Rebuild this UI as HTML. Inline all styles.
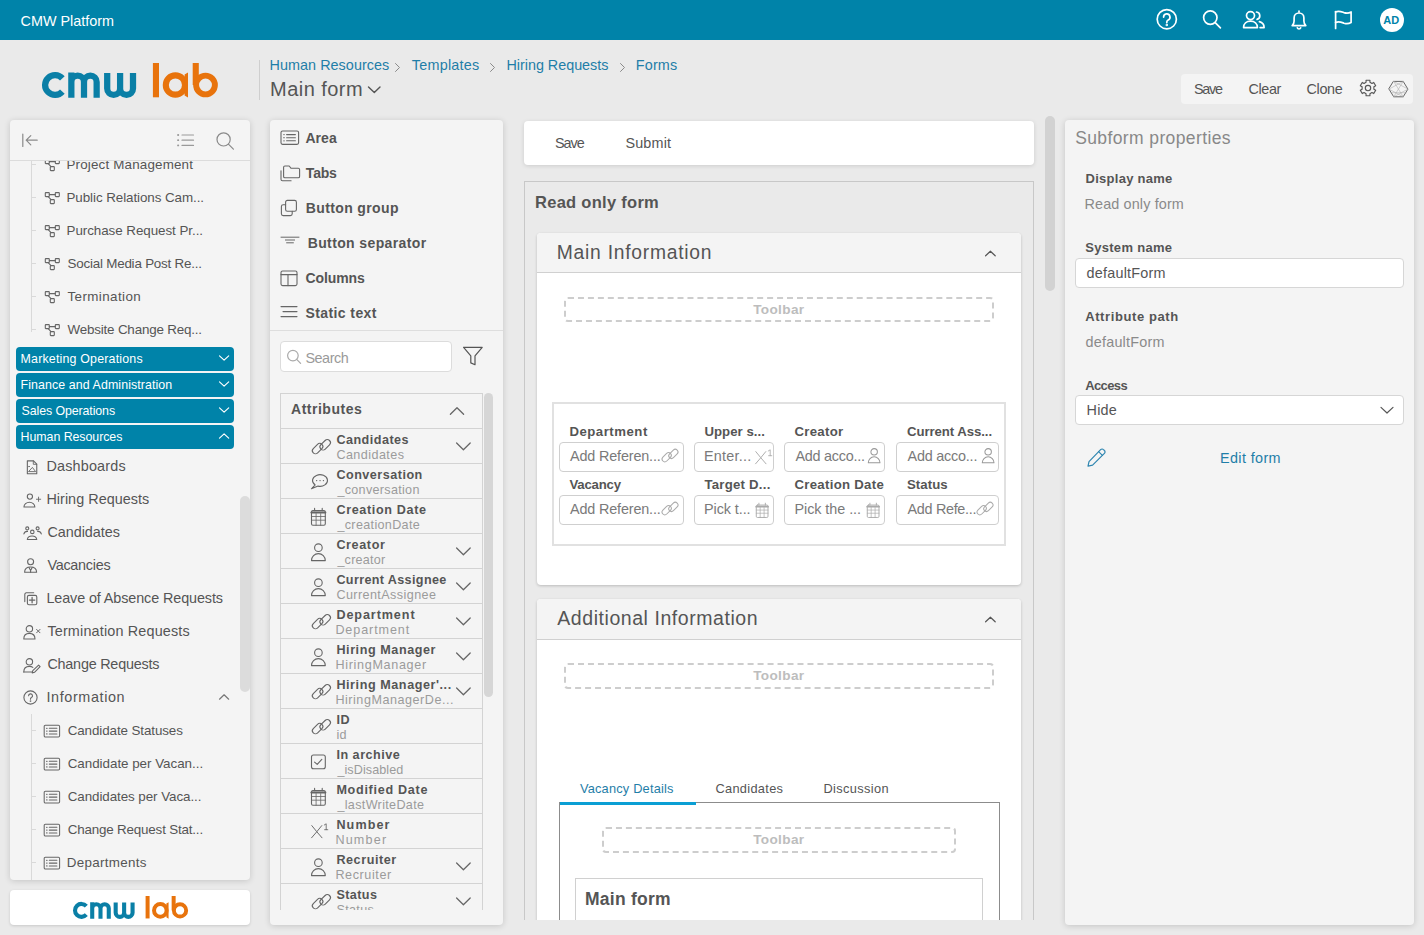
<!DOCTYPE html>
<html><head><meta charset="utf-8"><title>CMW Platform</title>
<style>
html,body{margin:0;padding:0;}
body{width:1424px;height:935px;overflow:hidden;position:relative;background:#eaeaea;font-family:"Liberation Sans", sans-serif;}
.t{position:absolute;white-space:nowrap;}
.r{position:absolute;}
.s{position:absolute;overflow:visible;}
.clip{position:absolute;overflow:hidden;}
</style></head><body>
<div class="r" style="left:0px;top:0px;width:1424px;height:40px;background:#0083a9"></div>
<div class="t" style="left:20.60px;top:13.81px;font-size:14.4px;line-height:14.4px;color:#fff;letter-spacing:-0.014px;">CMW Platform</div>
<svg class="s" style="left:1155px;top:8px;" width="24" height="24" viewBox="0 0 24 24" fill="none" stroke="#fff" stroke-width="1.7" stroke-linecap="round" stroke-linejoin="round"><circle cx="11.8" cy="11.2" r="9.6"/><path d="M8.6 9.1a3.2 3.2 0 1 1 4.6 2.9c-.9.5-1.4 1-1.4 2v.6"/><circle cx="11.8" cy="16.9" r=".4" fill="#fff"/></svg>
<svg class="s" style="left:1200px;top:8px;" width="24" height="24" viewBox="0 0 24 24" fill="none" stroke="#fff" stroke-width="1.7" stroke-linecap="round" stroke-linejoin="round"><circle cx="10.3" cy="9.6" r="6.7"/><path d="M15.2 14.6l5.2 5.3"/></svg>
<svg class="s" style="left:1241px;top:8px;" width="27" height="24" viewBox="0 0 27 24" fill="none" stroke="#fff" stroke-width="1.7" stroke-linecap="round" stroke-linejoin="round"><circle cx="9.5" cy="7.6" r="4"/><path d="M2.6 19.6c0-4 3-6.4 6.9-6.4s6.9 2.4 6.9 6.4z"/><path d="M15.5 4a3.8 3.8 0 0 1 .6 7.4"/><path d="M18.4 13.6c2.7.7 4.7 2.8 4.7 6h-4"/></svg>
<svg class="s" style="left:1287px;top:8px;" width="24" height="24" viewBox="0 0 24 24" fill="none" stroke="#fff" stroke-width="1.7" stroke-linecap="round" stroke-linejoin="round"><path d="M5.2 17.6h13.6c-1.3-1.3-1.9-2.6-1.9-4.6V9.9a4.9 4.9 0 0 0-9.8 0V13c0 2-.6 3.3-1.9 4.6z"/><path d="M10.3 19.8a1.8 1.8 0 0 0 3.4 0"/><path d="M12 3v1"/></svg>
<svg class="s" style="left:1331px;top:8px;" width="24" height="24" viewBox="0 0 24 24" fill="none" stroke="#fff" stroke-width="1.7" stroke-linecap="round" stroke-linejoin="round"><path d="M4.6 20.4V3.6"/><path d="M4.6 4c3-1.6 5.8-.3 8.4.6 2.5.8 4.5.8 7.1-.6v10.6c-2.6 1.4-4.6 1.4-7.1.6-2.6-.9-5.4-2.2-8.4-.6"/></svg>
<div class="r" style="left:1380px;top:8px;width:24px;height:24px;border-radius:50%;background:#fff"></div>
<div class="t" style="left:1383.30px;top:14.99px;font-size:11px;line-height:11px;color:#0083a9;font-weight:700;">AD</div>
<svg class="s" style="left:39px;top:63px" width="182.00" height="38.00" viewBox="0 0 182 38"><g fill="none"><g stroke="#0a7fa6" stroke-width="6.25"><path d="M23.36 15.38A9.9 9.9 0 1 0 23.36 28.62"/><path d="M32.35 9.4V34.7M32.35 18.9A6.325 6.325 0 0 1 45 18.9V34.7M45 18.9A6.325 6.325 0 0 1 57.65 18.9V34.7"/><path d="M68.2 10V25.4A6.45 6.45 0 0 0 81.1 25.4V10M81.1 25.4A6.45 6.45 0 0 0 94 25.4V10"/></g><g stroke="#e8730c" stroke-width="6.1"><path d="M116.95 0V34.3"/><circle cx="136.4" cy="22" r="9.6"/><path d="M156.75 0V22"/><circle cx="166.5" cy="22" r="9.4" stroke-width="5.9"/></g><path fill="#e8730c" d="M145.6 11.5L149 9.6V34.6L145.6 32.5z"/></g></svg>
<div class="r" style="left:259px;top:60px;width:1px;height:40px;background:#cfcfcf"></div>
<div class="t" style="left:269.60px;top:57.71px;font-size:14.4px;line-height:14.4px;color:#1f7ea8;letter-spacing:0.030px;">Human Resources</div>
<svg class="s" style="left:392px;top:61px;" width="10" height="12" viewBox="0 0 10 12" fill="none" stroke="#8a8a8a" stroke-width="1.0" stroke-linecap="round" stroke-linejoin="round"><path d="M3.5 2.5l4 4-4 4"/></svg>
<div class="t" style="left:411.80px;top:57.71px;font-size:14.4px;line-height:14.4px;color:#1f7ea8;letter-spacing:0.226px;">Templates</div>
<svg class="s" style="left:487px;top:61px;" width="10" height="12" viewBox="0 0 10 12" fill="none" stroke="#8a8a8a" stroke-width="1.0" stroke-linecap="round" stroke-linejoin="round"><path d="M3.5 2.5l4 4-4 4"/></svg>
<div class="t" style="left:506.50px;top:57.71px;font-size:14.4px;line-height:14.4px;color:#1f7ea8;letter-spacing:-0.035px;">Hiring Requests</div>
<svg class="s" style="left:617px;top:61px;" width="10" height="12" viewBox="0 0 10 12" fill="none" stroke="#8a8a8a" stroke-width="1.0" stroke-linecap="round" stroke-linejoin="round"><path d="M3.5 2.5l4 4-4 4"/></svg>
<div class="t" style="left:635.80px;top:57.71px;font-size:14.4px;line-height:14.4px;color:#1f7ea8;letter-spacing:0.157px;">Forms</div>
<div class="t" style="left:270.00px;top:78.87px;font-size:20px;line-height:20px;color:#555;letter-spacing:0.469px;">Main form</div>
<svg class="s" style="left:366px;top:84px;" width="16" height="12" viewBox="0 0 16 12" fill="none" stroke="#555" stroke-width="1.4" stroke-linecap="round" stroke-linejoin="round"><path d="M2.5 3l5.8 5.6L14 3"/></svg>
<div class="r" style="left:1181px;top:74px;width:232px;height:30px;background:#f4f4f4;border-radius:4px"></div>
<div class="t" style="left:1194.00px;top:81.71px;font-size:14.4px;line-height:14.4px;color:#555;letter-spacing:-1.266px;">Save</div>
<div class="t" style="left:1248.50px;top:81.71px;font-size:14.4px;line-height:14.4px;color:#555;letter-spacing:-0.399px;">Clear</div>
<div class="t" style="left:1306.50px;top:81.71px;font-size:14.4px;line-height:14.4px;color:#555;letter-spacing:-0.349px;">Clone</div>
<svg class="s" style="left:1358.2px;top:78.3px;" width="20" height="20" viewBox="0 0 20 20" fill="none" stroke="#555" stroke-width="1.15" stroke-linecap="round" stroke-linejoin="round"><path d="M8.05 4.33L8.06 2.24L11.94 2.24L11.95 4.33L13.94 5.47L15.75 4.44L17.69 7.79L15.89 8.86L15.89 11.14L17.69 12.21L15.75 15.56L13.94 14.53L11.95 15.67L11.94 17.76L8.06 17.76L8.05 15.67L6.06 14.53L4.25 15.56L2.31 12.21L4.11 11.14L4.11 8.86L2.31 7.79L4.25 4.44L6.06 5.47z"/><circle cx="10" cy="10" r="2.7"/></svg>
<svg class="s" style="left:1388px;top:79.5px;" width="21" height="18" viewBox="0 0 21 18" fill="none" stroke="#666" stroke-width="1.0" stroke-linecap="round" stroke-linejoin="round"><path d="M5.7 1.4h9.5l4.7 7.7-4.7 7.7H5.7L1 9.1z" stroke="#666"/><path d="M5.7 1.4l9.5 15.4M15.2 1.4L5.7 16.8M1 9.1l14.2-7.7M1 9.1l14.2 7.7M19.9 9.1L5.7 1.4M19.9 9.1L5.7 16.8M3 12.7h15" stroke-width=".55" stroke="#aaa"/></svg>
<div class="r" style="left:10px;top:120px;width:240px;height:760px;background:#f4f4f4;border-radius:4px;box-shadow:0 1px 6px rgba(0,0,0,.16)"></div>
<div class="r" style="left:10px;top:160px;width:240px;height:1px;background:#dcdcdc"></div>
<svg class="s" style="left:20px;top:131px;" width="20" height="18" viewBox="0 0 20 18" fill="none" stroke="#8a8a8a" stroke-width="1.2" stroke-linecap="round" stroke-linejoin="round"><path d="M2.8 3v12.5"/><path d="M17.2 9.2H6.2M10.8 4.6L6.2 9.2l4.6 4.6"/></svg>
<svg class="s" style="left:175px;top:131px;" width="21" height="18" viewBox="0 0 21 18" fill="none" stroke="#9a9a9a" stroke-width="1.2" stroke-linecap="round" stroke-linejoin="round"><path d="M7 4h11.5M7 9.2h11.5M7 14.4h11.5" /><path d="M3 4h.3M3 9.2h.3M3 14.4h.3" stroke-width="1.8"/></svg>
<svg class="s" style="left:214px;top:130px;" width="22" height="22" viewBox="0 0 22 22" fill="none" stroke="#8a8a8a" stroke-width="1.2" stroke-linecap="round" stroke-linejoin="round"><circle cx="9.6" cy="9.4" r="6.6"/><path d="M14.4 14.2l5 5"/></svg>
<div class="clip" style="left:10px;top:161px;width:240px;height:719px">
<div class="r" style="left:20.5px;top:-1px;width:1px;height:172px;background:#d9d9d9"></div>
<div class="r" style="left:21px;top:3px;width:5px;height:1px;background:#d9d9d9"></div>
<svg class="s" style="left:33.5px;top:-3.1999999999999886px;" width="17" height="14" viewBox="0 0 17 14" fill="none" stroke="#666" stroke-width="1.1" stroke-linecap="round" stroke-linejoin="round"><rect x="1.3" y="1.6" width="4" height="4" rx=".6"/><rect x="11.3" y="1.6" width="4" height="4" rx=".6"/><rect x="6.3" y="8.6" width="4" height="4" rx=".6"/><path d="M5.3 3.6h6M4.2 5.6l2.8 3"/></svg>
<div class="t" style="left:56.50px;top:-3.34px;font-size:13.4px;line-height:13.4px;color:#555;letter-spacing:0.168px;">Project Management</div>
<div class="r" style="left:21px;top:36px;width:5px;height:1px;background:#d9d9d9"></div>
<svg class="s" style="left:33.5px;top:29.80000000000001px;" width="17" height="14" viewBox="0 0 17 14" fill="none" stroke="#666" stroke-width="1.1" stroke-linecap="round" stroke-linejoin="round"><rect x="1.3" y="1.6" width="4" height="4" rx=".6"/><rect x="11.3" y="1.6" width="4" height="4" rx=".6"/><rect x="6.3" y="8.6" width="4" height="4" rx=".6"/><path d="M5.3 3.6h6M4.2 5.6l2.8 3"/></svg>
<div class="t" style="left:56.50px;top:29.66px;font-size:13.4px;line-height:13.4px;color:#555;letter-spacing:-0.075px;">Public Relations Cam...</div>
<div class="r" style="left:21px;top:69px;width:5px;height:1px;background:#d9d9d9"></div>
<svg class="s" style="left:33.5px;top:62.80000000000001px;" width="17" height="14" viewBox="0 0 17 14" fill="none" stroke="#666" stroke-width="1.1" stroke-linecap="round" stroke-linejoin="round"><rect x="1.3" y="1.6" width="4" height="4" rx=".6"/><rect x="11.3" y="1.6" width="4" height="4" rx=".6"/><rect x="6.3" y="8.6" width="4" height="4" rx=".6"/><path d="M5.3 3.6h6M4.2 5.6l2.8 3"/></svg>
<div class="t" style="left:56.50px;top:62.66px;font-size:13.4px;line-height:13.4px;color:#555;letter-spacing:-0.056px;">Purchase Request Pr...</div>
<div class="r" style="left:21px;top:102px;width:5px;height:1px;background:#d9d9d9"></div>
<svg class="s" style="left:33.5px;top:95.80000000000001px;" width="17" height="14" viewBox="0 0 17 14" fill="none" stroke="#666" stroke-width="1.1" stroke-linecap="round" stroke-linejoin="round"><rect x="1.3" y="1.6" width="4" height="4" rx=".6"/><rect x="11.3" y="1.6" width="4" height="4" rx=".6"/><rect x="6.3" y="8.6" width="4" height="4" rx=".6"/><path d="M5.3 3.6h6M4.2 5.6l2.8 3"/></svg>
<div class="t" style="left:57.50px;top:95.66px;font-size:13.4px;line-height:13.4px;color:#555;letter-spacing:-0.212px;">Social Media Post Re...</div>
<div class="r" style="left:21px;top:135px;width:5px;height:1px;background:#d9d9d9"></div>
<svg class="s" style="left:33.5px;top:128.8px;" width="17" height="14" viewBox="0 0 17 14" fill="none" stroke="#666" stroke-width="1.1" stroke-linecap="round" stroke-linejoin="round"><rect x="1.3" y="1.6" width="4" height="4" rx=".6"/><rect x="11.3" y="1.6" width="4" height="4" rx=".6"/><rect x="6.3" y="8.6" width="4" height="4" rx=".6"/><path d="M5.3 3.6h6M4.2 5.6l2.8 3"/></svg>
<div class="t" style="left:57.50px;top:128.66px;font-size:13.4px;line-height:13.4px;color:#555;letter-spacing:0.403px;">Termination</div>
<div class="r" style="left:21px;top:168px;width:5px;height:1px;background:#d9d9d9"></div>
<svg class="s" style="left:33.5px;top:161.8px;" width="17" height="14" viewBox="0 0 17 14" fill="none" stroke="#666" stroke-width="1.1" stroke-linecap="round" stroke-linejoin="round"><rect x="1.3" y="1.6" width="4" height="4" rx=".6"/><rect x="11.3" y="1.6" width="4" height="4" rx=".6"/><rect x="6.3" y="8.6" width="4" height="4" rx=".6"/><path d="M5.3 3.6h6M4.2 5.6l2.8 3"/></svg>
<div class="t" style="left:57.50px;top:161.66px;font-size:13.4px;line-height:13.4px;color:#555;letter-spacing:-0.184px;">Website Change Req...</div>
<div class="r" style="left:6px;top:186px;width:218px;height:24px;background:#0083a9;border-radius:4px"></div>
<div class="t" style="left:10.60px;top:191.50px;font-size:12.4px;line-height:12.4px;color:#fff;letter-spacing:0.186px;">Marketing Operations</div>
<svg class="s" style="left:208px;top:192.8px;" width="12" height="8" viewBox="0 0 12 8" fill="none" stroke="#fff" stroke-width="1.15" stroke-linecap="round" stroke-linejoin="round"><path d="M1.5 1.8l4.6 4.4 4.6-4.4"/></svg>
<div class="r" style="left:6px;top:212px;width:218px;height:24px;background:#0083a9;border-radius:4px"></div>
<div class="t" style="left:10.60px;top:217.50px;font-size:12.4px;line-height:12.4px;color:#fff;letter-spacing:0.086px;">Finance and Administration</div>
<svg class="s" style="left:208px;top:218.8px;" width="12" height="8" viewBox="0 0 12 8" fill="none" stroke="#fff" stroke-width="1.15" stroke-linecap="round" stroke-linejoin="round"><path d="M1.5 1.8l4.6 4.4 4.6-4.4"/></svg>
<div class="r" style="left:6px;top:238px;width:218px;height:24px;background:#0083a9;border-radius:4px"></div>
<div class="t" style="left:11.60px;top:243.50px;font-size:12.4px;line-height:12.4px;color:#fff;letter-spacing:-0.103px;">Sales Operations</div>
<svg class="s" style="left:208px;top:244.8px;" width="12" height="8" viewBox="0 0 12 8" fill="none" stroke="#fff" stroke-width="1.15" stroke-linecap="round" stroke-linejoin="round"><path d="M1.5 1.8l4.6 4.4 4.6-4.4"/></svg>
<div class="r" style="left:6px;top:264px;width:218px;height:24px;background:#0083a9;border-radius:4px"></div>
<div class="t" style="left:10.60px;top:269.50px;font-size:12.4px;line-height:12.4px;color:#fff;letter-spacing:-0.058px;">Human Resources</div>
<svg class="s" style="left:208px;top:270.8px;" width="12" height="8" viewBox="0 0 12 8" fill="none" stroke="#fff" stroke-width="1.15" stroke-linecap="round" stroke-linejoin="round"><path d="M1.5 6.2l4.6-4.4 4.6 4.4"/></svg>
<svg class="s" style="left:12.5px;top:297.5px;" width="19" height="17" viewBox="0 0 19 17" fill="none" stroke="#666" stroke-width="1.1" stroke-linecap="round" stroke-linejoin="round"><path d="M4.35 1.85h6.2l3.2 3.2v9.65H4.35z"/><path d="M10.3 1.9v3.4h3.4" stroke-width=".9"/><path d="M5.8 12.3l3.6-3.9 3 3.9z" stroke-width=".9"/><circle cx="6" cy="7.6" r=".35" stroke-width=".8"/></svg>
<div class="t" style="left:36.40px;top:297.81px;font-size:14.4px;line-height:14.4px;color:#555;letter-spacing:0.178px;">Dashboards</div>
<svg class="s" style="left:12.5px;top:330.5px;" width="19" height="17" viewBox="0 0 19 17" fill="none" stroke="#666" stroke-width="1.1" stroke-linecap="round" stroke-linejoin="round"><circle cx="6.9" cy="4.6" r="2.6"/><path d="M.95 14.95A5.45 4.7 0 0 1 11.85 14.95z"/><path d="M15.55 5.1v4.3M13.4 7.25h4.3" stroke-width=".9"/></svg>
<div class="t" style="left:36.40px;top:330.81px;font-size:14.4px;line-height:14.4px;color:#555;letter-spacing:0.037px;">Hiring Requests</div>
<svg class="s" style="left:12.5px;top:363.5px;" width="19" height="17" viewBox="0 0 19 17" fill="none" stroke="#666" stroke-width="1.1" stroke-linecap="round" stroke-linejoin="round"><circle cx="4.25" cy="3.4" r="1.5"/><circle cx="9.3" cy="6.9" r="1.75"/><circle cx="14.6" cy="3.4" r="1.5"/><path d="M.9 8.9c.4-1.6 1.8-2.6 3.6-2.5M18.3 8.9c-.4-1.6-1.8-2.6-3.6-2.5"/><path d="M4.3 14.55A4.75 3.9 0 0 1 13.75 14.55z"/></svg>
<div class="t" style="left:37.40px;top:363.81px;font-size:14.4px;line-height:14.4px;color:#555;letter-spacing:-0.034px;">Candidates</div>
<svg class="s" style="left:12.5px;top:396.5px;" width="19" height="17" viewBox="0 0 19 17" fill="none" stroke="#666" stroke-width="1.1" stroke-linecap="round" stroke-linejoin="round"><circle cx="7.6" cy="3.8" r="3"/><path d="M1.6 14.3c0-3.3 2.5-5.3 6-5.3s6 2 6 5.3z"/><path d="M6 9.4l1.6 3 1.6-3M7.6 12.4v1.8"/></svg>
<div class="t" style="left:37.40px;top:396.81px;font-size:14.4px;line-height:14.4px;color:#555;letter-spacing:-0.266px;">Vacancies</div>
<svg class="s" style="left:12.5px;top:429.5px;" width="19" height="17" viewBox="0 0 19 17" fill="none" stroke="#666" stroke-width="1.1" stroke-linecap="round" stroke-linejoin="round"><path d="M1.8 10.6V3.4c0-.9.6-1.6 1.5-1.6h7.4"/><rect x="4.4" y="4.4" width="9.4" height="9.4" rx="1.6"/><path d="M9.1 6.4v5.4M6.4 9.1h5.4" stroke-width="1.25"/></svg>
<div class="t" style="left:36.40px;top:429.81px;font-size:14.4px;line-height:14.4px;color:#555;letter-spacing:-0.109px;">Leave of Absence Requests</div>
<svg class="s" style="left:12.5px;top:462.5px;" width="19" height="17" viewBox="0 0 19 17" fill="none" stroke="#666" stroke-width="1.1" stroke-linecap="round" stroke-linejoin="round"><circle cx="6.4" cy="4.8" r="3.2"/><path d="M.8 15c0-3.5 2.4-5.6 5.6-5.6s5.6 2.1 5.6 5.6z"/><path d="M13.6 5.4l3.4 3.4M17 5.4l-3.4 3.4" stroke-width="1"/></svg>
<div class="t" style="left:37.40px;top:462.81px;font-size:14.4px;line-height:14.4px;color:#555;letter-spacing:0.164px;">Termination Requests</div>
<svg class="s" style="left:12.5px;top:495.5px;" width="19" height="17" viewBox="0 0 19 17" fill="none" stroke="#666" stroke-width="1.1" stroke-linecap="round" stroke-linejoin="round"><circle cx="6.4" cy="4.8" r="3.2"/><path d="M.8 15c0-3.5 2.4-5.6 5.6-5.6 1.3 0 2.5.3 3.4 1"/><path d="M15.6 8.2l1.5 1.5-5.6 5.6-2.3.6.6-2.3z"/><path d="M.8 15h8"/></svg>
<div class="t" style="left:37.40px;top:495.81px;font-size:14.4px;line-height:14.4px;color:#555;letter-spacing:-0.229px;">Change Requests</div>
<svg class="s" style="left:12.5px;top:528.5px;" width="19" height="17" viewBox="0 0 19 17" fill="none" stroke="#666" stroke-width="1.1" stroke-linecap="round" stroke-linejoin="round"><circle cx="7.5" cy="7.5" r="6.6"/><path d="M5.6 5.8a1.95 1.95 0 1 1 2.9 1.7c-.6.3-1 .7-1 1.3v.5"/><circle cx="7.5" cy="11.1" r=".3"/></svg>
<div class="t" style="left:36.40px;top:528.81px;font-size:14.4px;line-height:14.4px;color:#555;letter-spacing:0.622px;">Information</div>
<svg class="s" style="left:208px;top:532px;" width="12" height="8" viewBox="0 0 12 8" fill="none" stroke="#777" stroke-width="1.2" stroke-linecap="round" stroke-linejoin="round"><path d="M1.5 6.2l4.6-4.4 4.6 4.4"/></svg>
<div class="r" style="left:20.5px;top:553px;width:1px;height:200px;background:#d9d9d9"></div>
<div class="r" style="left:21px;top:569px;width:5px;height:1px;background:#d9d9d9"></div>
<svg class="s" style="left:33px;top:562.8px;" width="18" height="15" viewBox="0 0 18 15" fill="none" stroke="#666" stroke-width="1.05" stroke-linecap="round" stroke-linejoin="round"><rect x="1.2" y="1.2" width="15.4" height="11.8" rx="1.2"/><path d="M6.3 4.3h7.6M6.3 7.1h7.6M6.3 9.9h7.6"/><path d="M3.7 4.3h.3M3.7 7.1h.3M3.7 9.9h.3" stroke-width="1.3"/></svg>
<div class="t" style="left:57.70px;top:562.66px;font-size:13.4px;line-height:13.4px;color:#555;letter-spacing:-0.099px;">Candidate Statuses</div>
<div class="r" style="left:21px;top:602px;width:5px;height:1px;background:#d9d9d9"></div>
<svg class="s" style="left:33px;top:595.8px;" width="18" height="15" viewBox="0 0 18 15" fill="none" stroke="#666" stroke-width="1.05" stroke-linecap="round" stroke-linejoin="round"><rect x="1.2" y="1.2" width="15.4" height="11.8" rx="1.2"/><path d="M6.3 4.3h7.6M6.3 7.1h7.6M6.3 9.9h7.6"/><path d="M3.7 4.3h.3M3.7 7.1h.3M3.7 9.9h.3" stroke-width="1.3"/></svg>
<div class="t" style="left:57.70px;top:595.66px;font-size:13.4px;line-height:13.4px;color:#555;letter-spacing:-0.027px;">Candidate per Vacan...</div>
<div class="r" style="left:21px;top:635px;width:5px;height:1px;background:#d9d9d9"></div>
<svg class="s" style="left:33px;top:628.8px;" width="18" height="15" viewBox="0 0 18 15" fill="none" stroke="#666" stroke-width="1.05" stroke-linecap="round" stroke-linejoin="round"><rect x="1.2" y="1.2" width="15.4" height="11.8" rx="1.2"/><path d="M6.3 4.3h7.6M6.3 7.1h7.6M6.3 9.9h7.6"/><path d="M3.7 4.3h.3M3.7 7.1h.3M3.7 9.9h.3" stroke-width="1.3"/></svg>
<div class="t" style="left:57.70px;top:628.66px;font-size:13.4px;line-height:13.4px;color:#555;letter-spacing:-0.072px;">Candidates per Vaca...</div>
<div class="r" style="left:21px;top:668px;width:5px;height:1px;background:#d9d9d9"></div>
<svg class="s" style="left:33px;top:661.8px;" width="18" height="15" viewBox="0 0 18 15" fill="none" stroke="#666" stroke-width="1.05" stroke-linecap="round" stroke-linejoin="round"><rect x="1.2" y="1.2" width="15.4" height="11.8" rx="1.2"/><path d="M6.3 4.3h7.6M6.3 7.1h7.6M6.3 9.9h7.6"/><path d="M3.7 4.3h.3M3.7 7.1h.3M3.7 9.9h.3" stroke-width="1.3"/></svg>
<div class="t" style="left:57.70px;top:661.66px;font-size:13.4px;line-height:13.4px;color:#555;letter-spacing:-0.180px;">Change Request Stat...</div>
<div class="r" style="left:21px;top:701px;width:5px;height:1px;background:#d9d9d9"></div>
<svg class="s" style="left:33px;top:694.8px;" width="18" height="15" viewBox="0 0 18 15" fill="none" stroke="#666" stroke-width="1.05" stroke-linecap="round" stroke-linejoin="round"><rect x="1.2" y="1.2" width="15.4" height="11.8" rx="1.2"/><path d="M6.3 4.3h7.6M6.3 7.1h7.6M6.3 9.9h7.6"/><path d="M3.7 4.3h.3M3.7 7.1h.3M3.7 9.9h.3" stroke-width="1.3"/></svg>
<div class="t" style="left:56.70px;top:694.66px;font-size:13.4px;line-height:13.4px;color:#555;letter-spacing:0.314px;">Departments</div>
<div class="r" style="left:230px;top:335px;width:10px;height:196px;background:#dcdcdc;border-radius:5px"></div>
</div>
<div class="r" style="left:10px;top:890px;width:240px;height:35px;background:#fff;border-radius:4px;box-shadow:0 1px 3px rgba(0,0,0,.15)"></div>
<svg class="s" style="left:71px;top:896px" width="119.21" height="24.89" viewBox="0 0 182 38"><g fill="none"><g stroke="#0a7fa6" stroke-width="6.25"><path d="M23.36 15.38A9.9 9.9 0 1 0 23.36 28.62"/><path d="M32.35 9.4V34.7M32.35 18.9A6.325 6.325 0 0 1 45 18.9V34.7M45 18.9A6.325 6.325 0 0 1 57.65 18.9V34.7"/><path d="M68.2 10V25.4A6.45 6.45 0 0 0 81.1 25.4V10M81.1 25.4A6.45 6.45 0 0 0 94 25.4V10"/></g><g stroke="#e8730c" stroke-width="6.1"><path d="M116.95 0V34.3"/><circle cx="136.4" cy="22" r="9.6"/><path d="M156.75 0V22"/><circle cx="166.5" cy="22" r="9.4" stroke-width="5.9"/></g><path fill="#e8730c" d="M145.6 11.5L149 9.6V34.6L145.6 32.5z"/></g></svg>
<div class="r" style="left:270px;top:120px;width:233px;height:805px;background:#f4f4f4;border-radius:4px;box-shadow:0 1px 6px rgba(0,0,0,.16)"></div>
<svg class="s" style="left:280px;top:129.6px;" width="20" height="16" viewBox="0 0 20 16" fill="none" stroke="#666" stroke-width="1.1" stroke-linecap="round" stroke-linejoin="round"><rect x="1" y="1" width="17.6" height="13.4" rx="1.6"/><path d="M6.6 4.6h8.8M6.6 7.7h8.8M6.6 10.8h8.8"/><path d="M3.9 4.6h.2M3.9 7.7h.2M3.9 10.8h.2" stroke-width="1.3"/></svg>
<div class="t" style="left:305.40px;top:130.75px;font-size:14px;line-height:14px;color:#555;font-weight:700;letter-spacing:0.085px;">Area</div>
<svg class="s" style="left:278.5px;top:163.5px;" width="23" height="19" viewBox="0 0 23 19" fill="none" stroke="#666" stroke-width="1.1" stroke-linecap="round" stroke-linejoin="round"><path d="M2 6.8v8.4c0 .9.6 1.5 1.5 1.5h8.6"/><path d="M4.6 3.8V12.4c0 .8.5 1.3 1.3 1.3h13.4c.8 0 1.3-.5 1.3-1.3V5.6c0-.8-.5-1.3-1.3-1.3h-7.2L10.2 2H5.9c-.8 0-1.3.5-1.3 1.3z"/></svg>
<div class="t" style="left:305.80px;top:165.75px;font-size:14px;line-height:14px;color:#555;font-weight:700;letter-spacing:-0.184px;">Tabs</div>
<svg class="s" style="left:280px;top:198.6px;" width="18" height="18" viewBox="0 0 18 18" fill="none" stroke="#666" stroke-width="1.1" stroke-linecap="round" stroke-linejoin="round"><path d="M5.6 5.8H3.2c-1 0-1.8.8-1.8 1.8v7.2c0 1 .8 1.8 1.8 1.8h7.2c1 0 1.8-.8 1.8-1.8v-2.4"/><rect x="5.6" y="1.4" width="10.8" height="10.8" rx="1.8"/></svg>
<div class="t" style="left:305.80px;top:200.75px;font-size:14px;line-height:14px;color:#555;font-weight:700;letter-spacing:0.365px;">Button group</div>
<svg class="s" style="left:280px;top:233.5px;" width="20" height="11" viewBox="0 0 20 11" fill="none" stroke="#666" stroke-width="1.1" stroke-linecap="round" stroke-linejoin="round"><path d="M1 3.2h18M5.4 6h9.2M6.6 8.8h6.8" stroke-width="1"/></svg>
<div class="t" style="left:307.70px;top:235.75px;font-size:14px;line-height:14px;color:#555;font-weight:700;letter-spacing:0.377px;">Button separator</div>
<svg class="s" style="left:280px;top:269.7px;" width="18" height="17" viewBox="0 0 18 17" fill="none" stroke="#666" stroke-width="1.1" stroke-linecap="round" stroke-linejoin="round"><rect x="1" y="1" width="16" height="14.6" rx="1.6"/><path d="M1 4.6h16M8 4.6v11" /></svg>
<div class="t" style="left:305.40px;top:270.75px;font-size:14px;line-height:14px;color:#555;font-weight:700;letter-spacing:-0.084px;">Columns</div>
<svg class="s" style="left:280px;top:305.3px;" width="18" height="13" viewBox="0 0 18 13" fill="none" stroke="#666" stroke-width="1.1" stroke-linecap="round" stroke-linejoin="round"><path d="M1 1.6h16M3 6.6h14M1 11.6h16"/></svg>
<div class="t" style="left:305.40px;top:305.75px;font-size:14px;line-height:14px;color:#555;font-weight:700;letter-spacing:0.415px;">Static text</div>
<div class="r" style="left:270px;top:330px;width:233px;height:1px;background:#dedede"></div>
<div class="r" style="left:280px;top:341px;width:172px;height:31px;background:#fff;border:1px solid #dcdcdc;border-radius:4px;box-sizing:border-box"></div>
<svg class="s" style="left:285px;top:348px;" width="18" height="18" viewBox="0 0 18 18" fill="none" stroke="#aaa" stroke-width="1.2" stroke-linecap="round" stroke-linejoin="round"><circle cx="7.9" cy="7.6" r="5.3"/><path d="M11.7 11.4l3.9 3.9"/></svg>
<div class="t" style="left:305.40px;top:350.71px;font-size:14.4px;line-height:14.4px;color:#9a9a9a;letter-spacing:-0.439px;">Search</div>
<svg class="s" style="left:461px;top:345px;" width="24" height="22" viewBox="0 0 24 22" fill="none" stroke="#555" stroke-width="1.2" stroke-linecap="round" stroke-linejoin="round"><path d="M2.6 2.3h18.6l-7.2 8.6v8.8l-4.2-1.8v-7z"/></svg>
<div class="clip" style="left:280px;top:393px;width:203px;height:517px">
<div class="r" style="left:0px;top:0px;width:203px;height:600px;border:1px solid #d3d3d3;border-bottom:none;box-sizing:border-box"></div>
<div class="t" style="left:11.00px;top:9.15px;font-size:14px;line-height:14px;color:#555;font-weight:700;letter-spacing:0.520px;">Attributes</div>
<svg class="s" style="left:168px;top:11px;" width="18" height="13" viewBox="0 0 18 13" fill="none" stroke="#666" stroke-width="1.3" stroke-linecap="round" stroke-linejoin="round"><path d="M2.4 10.2l6.6-6.4 6.6 6.4"/></svg>
<div class="r" style="left:0px;top:35px;width:203px;height:1px;background:#d3d3d3"></div>
<svg class="s" style="left:30px;top:43.60000000000002px;" width="24" height="20" viewBox="0 0 24 20" fill="none" stroke="#666" stroke-width="1.1" stroke-linecap="round" stroke-linejoin="round"><rect x="-6.1" y="-3.1" width="12.2" height="6.2" rx="3.1" transform="translate(7.6 11.6) rotate(-45)"/><rect x="-6.1" y="-3.1" width="12.2" height="6.2" rx="3.1" transform="translate(15.2 7.8) rotate(-45)"/></svg>
<div class="t" style="left:56.40px;top:40.53px;font-size:12.6px;line-height:12.6px;color:#555;font-weight:700;letter-spacing:0.480px;">Candidates</div>
<div class="t" style="left:56.40px;top:56.03px;font-size:12.6px;line-height:12.6px;color:#9b9b9b;letter-spacing:0.432px;">Candidates</div>
<svg class="s" style="left:175px;top:46.60000000000002px;" width="18" height="12" viewBox="0 0 18 12" fill="none" stroke="#666" stroke-width="1.25" stroke-linecap="round" stroke-linejoin="round"><path d="M1.6 3l6.8 6.8L15.2 3"/></svg>
<div class="r" style="left:0px;top:70px;width:203px;height:1px;background:#d3d3d3"></div>
<svg class="s" style="left:30px;top:78.60000000000002px;" width="24" height="20" viewBox="0 0 24 20" fill="none" stroke="#666" stroke-width="1.1" stroke-linecap="round" stroke-linejoin="round"><path d="M5.18 12.94L1.4 16.8l6.66-2.7A7.5 5.8 0 1 0 5.18 12.94z"/><path d="M6.6 8.6h.1M10 8.6h.1M13.4 8.6h.1" stroke-width="1.3"/></svg>
<div class="t" style="left:56.40px;top:75.53px;font-size:12.6px;line-height:12.6px;color:#555;font-weight:700;letter-spacing:0.492px;">Conversation</div>
<div class="t" style="left:57.40px;top:91.03px;font-size:12.6px;line-height:12.6px;color:#9b9b9b;letter-spacing:0.300px;">_conversation</div>
<div class="r" style="left:0px;top:105px;width:203px;height:1px;background:#d3d3d3"></div>
<svg class="s" style="left:30px;top:113.60000000000002px;" width="24" height="20" viewBox="0 0 24 20" fill="none" stroke="#666" stroke-width="1.1" stroke-linecap="round" stroke-linejoin="round"><rect x="1.5" y="3.6" width="13.8" height="14.6" rx="1.4"/><path d="M1.5 5.5h13.8" stroke-width="2.2"/><path d="M1.5 9.5h13.8M1.5 13.2h13.8M6.1 6.6v11.6M10.7 6.6v11.6" stroke-width=".8"/><path d="M4.6 1.4v2.2M12.2 1.4v2.2"/></svg>
<div class="t" style="left:56.40px;top:110.53px;font-size:12.6px;line-height:12.6px;color:#555;font-weight:700;letter-spacing:0.652px;">Creation Date</div>
<div class="t" style="left:57.40px;top:126.03px;font-size:12.6px;line-height:12.6px;color:#9b9b9b;letter-spacing:0.333px;">_creationDate</div>
<div class="r" style="left:0px;top:140px;width:203px;height:1px;background:#d3d3d3"></div>
<svg class="s" style="left:30px;top:148.60000000000002px;" width="24" height="20" viewBox="0 0 24 20" fill="none" stroke="#666" stroke-width="1.1" stroke-linecap="round" stroke-linejoin="round"><circle cx="8.4" cy="5.7" r="3.8"/><path d="M1.5 18.6A6.9 7 0 0 1 15.3 18.6z"/></svg>
<div class="t" style="left:56.40px;top:145.53px;font-size:12.6px;line-height:12.6px;color:#555;font-weight:700;letter-spacing:0.618px;">Creator</div>
<div class="t" style="left:57.40px;top:161.03px;font-size:12.6px;line-height:12.6px;color:#9b9b9b;letter-spacing:0.228px;">_creator</div>
<svg class="s" style="left:175px;top:151.60000000000002px;" width="18" height="12" viewBox="0 0 18 12" fill="none" stroke="#666" stroke-width="1.25" stroke-linecap="round" stroke-linejoin="round"><path d="M1.6 3l6.8 6.8L15.2 3"/></svg>
<div class="r" style="left:0px;top:175px;width:203px;height:1px;background:#d3d3d3"></div>
<svg class="s" style="left:30px;top:183.60000000000002px;" width="24" height="20" viewBox="0 0 24 20" fill="none" stroke="#666" stroke-width="1.1" stroke-linecap="round" stroke-linejoin="round"><circle cx="8.4" cy="5.7" r="3.8"/><path d="M1.5 18.6A6.9 7 0 0 1 15.3 18.6z"/></svg>
<div class="t" style="left:56.40px;top:180.53px;font-size:12.6px;line-height:12.6px;color:#555;font-weight:700;letter-spacing:0.362px;">Current Assignee</div>
<div class="t" style="left:56.40px;top:196.03px;font-size:12.6px;line-height:12.6px;color:#9b9b9b;letter-spacing:0.414px;">CurrentAssignee</div>
<svg class="s" style="left:175px;top:186.60000000000002px;" width="18" height="12" viewBox="0 0 18 12" fill="none" stroke="#666" stroke-width="1.25" stroke-linecap="round" stroke-linejoin="round"><path d="M1.6 3l6.8 6.8L15.2 3"/></svg>
<div class="r" style="left:0px;top:210px;width:203px;height:1px;background:#d3d3d3"></div>
<svg class="s" style="left:30px;top:218.60000000000002px;" width="24" height="20" viewBox="0 0 24 20" fill="none" stroke="#666" stroke-width="1.1" stroke-linecap="round" stroke-linejoin="round"><rect x="-6.1" y="-3.1" width="12.2" height="6.2" rx="3.1" transform="translate(7.6 11.6) rotate(-45)"/><rect x="-6.1" y="-3.1" width="12.2" height="6.2" rx="3.1" transform="translate(15.2 7.8) rotate(-45)"/></svg>
<div class="t" style="left:56.40px;top:215.53px;font-size:12.6px;line-height:12.6px;color:#555;font-weight:700;letter-spacing:0.913px;">Department</div>
<div class="t" style="left:55.40px;top:231.03px;font-size:12.6px;line-height:12.6px;color:#9b9b9b;letter-spacing:0.889px;">Department</div>
<svg class="s" style="left:175px;top:221.60000000000002px;" width="18" height="12" viewBox="0 0 18 12" fill="none" stroke="#666" stroke-width="1.25" stroke-linecap="round" stroke-linejoin="round"><path d="M1.6 3l6.8 6.8L15.2 3"/></svg>
<div class="r" style="left:0px;top:245px;width:203px;height:1px;background:#d3d3d3"></div>
<svg class="s" style="left:30px;top:253.60000000000002px;" width="24" height="20" viewBox="0 0 24 20" fill="none" stroke="#666" stroke-width="1.1" stroke-linecap="round" stroke-linejoin="round"><circle cx="8.4" cy="5.7" r="3.8"/><path d="M1.5 18.6A6.9 7 0 0 1 15.3 18.6z"/></svg>
<div class="t" style="left:56.40px;top:250.53px;font-size:12.6px;line-height:12.6px;color:#555;font-weight:700;letter-spacing:0.572px;">Hiring Manager</div>
<div class="t" style="left:55.40px;top:266.03px;font-size:12.6px;line-height:12.6px;color:#9b9b9b;letter-spacing:0.683px;">HiringManager</div>
<svg class="s" style="left:175px;top:256.6px;" width="18" height="12" viewBox="0 0 18 12" fill="none" stroke="#666" stroke-width="1.25" stroke-linecap="round" stroke-linejoin="round"><path d="M1.6 3l6.8 6.8L15.2 3"/></svg>
<div class="r" style="left:0px;top:280px;width:203px;height:1px;background:#d3d3d3"></div>
<svg class="s" style="left:30px;top:288.6px;" width="24" height="20" viewBox="0 0 24 20" fill="none" stroke="#666" stroke-width="1.1" stroke-linecap="round" stroke-linejoin="round"><rect x="-6.1" y="-3.1" width="12.2" height="6.2" rx="3.1" transform="translate(7.6 11.6) rotate(-45)"/><rect x="-6.1" y="-3.1" width="12.2" height="6.2" rx="3.1" transform="translate(15.2 7.8) rotate(-45)"/></svg>
<div class="t" style="left:56.40px;top:285.53px;font-size:12.6px;line-height:12.6px;color:#555;font-weight:700;letter-spacing:0.567px;">Hiring Manager'...</div>
<div class="t" style="left:55.40px;top:301.03px;font-size:12.6px;line-height:12.6px;color:#9b9b9b;letter-spacing:0.524px;">HiringManagerDe...</div>
<svg class="s" style="left:175px;top:291.6px;" width="18" height="12" viewBox="0 0 18 12" fill="none" stroke="#666" stroke-width="1.25" stroke-linecap="round" stroke-linejoin="round"><path d="M1.6 3l6.8 6.8L15.2 3"/></svg>
<div class="r" style="left:0px;top:315px;width:203px;height:1px;background:#d3d3d3"></div>
<svg class="s" style="left:30px;top:323.6px;" width="24" height="20" viewBox="0 0 24 20" fill="none" stroke="#666" stroke-width="1.1" stroke-linecap="round" stroke-linejoin="round"><rect x="-6.1" y="-3.1" width="12.2" height="6.2" rx="3.1" transform="translate(7.6 11.6) rotate(-45)"/><rect x="-6.1" y="-3.1" width="12.2" height="6.2" rx="3.1" transform="translate(15.2 7.8) rotate(-45)"/></svg>
<div class="t" style="left:56.40px;top:320.53px;font-size:12.6px;line-height:12.6px;color:#555;font-weight:700;letter-spacing:0.601px;">ID</div>
<div class="t" style="left:56.40px;top:336.03px;font-size:12.6px;line-height:12.6px;color:#9b9b9b;letter-spacing:0.402px;">id</div>
<div class="r" style="left:0px;top:350px;width:203px;height:1px;background:#d3d3d3"></div>
<svg class="s" style="left:30px;top:358.6px;" width="24" height="20" viewBox="0 0 24 20" fill="none" stroke="#666" stroke-width="1.1" stroke-linecap="round" stroke-linejoin="round"><rect x="1.5" y="3" width="13.8" height="13.8" rx="2"/><path d="M4.6 10.2l2.6 2.2 4.6-5"/></svg>
<div class="t" style="left:56.40px;top:355.53px;font-size:12.6px;line-height:12.6px;color:#555;font-weight:700;letter-spacing:0.512px;">In archive</div>
<div class="t" style="left:57.40px;top:371.03px;font-size:12.6px;line-height:12.6px;color:#9b9b9b;letter-spacing:0.080px;">_isDisabled</div>
<div class="r" style="left:0px;top:385px;width:203px;height:1px;background:#d3d3d3"></div>
<svg class="s" style="left:30px;top:393.6px;" width="24" height="20" viewBox="0 0 24 20" fill="none" stroke="#666" stroke-width="1.1" stroke-linecap="round" stroke-linejoin="round"><rect x="1.5" y="3.6" width="13.8" height="14.6" rx="1.4"/><path d="M1.5 5.5h13.8" stroke-width="2.2"/><path d="M1.5 9.5h13.8M1.5 13.2h13.8M6.1 6.6v11.6M10.7 6.6v11.6" stroke-width=".8"/><path d="M4.6 1.4v2.2M12.2 1.4v2.2"/></svg>
<div class="t" style="left:56.40px;top:390.53px;font-size:12.6px;line-height:12.6px;color:#555;font-weight:700;letter-spacing:0.712px;">Modified Date</div>
<div class="t" style="left:57.40px;top:406.03px;font-size:12.6px;line-height:12.6px;color:#9b9b9b;letter-spacing:0.327px;">_lastWriteDate</div>
<div class="r" style="left:0px;top:420px;width:203px;height:1px;background:#d3d3d3"></div>
<svg class="s" style="left:30px;top:428.6px;" width="24" height="20" viewBox="0 0 24 20" fill="none" stroke="#666" stroke-width="1.1" stroke-linecap="round" stroke-linejoin="round"><path d="M1.8 3.6C5 7.6 8.6 12 12 15.8M11.8 3.6C8.6 7.6 5 12 1.6 15.8" stroke-width=".95"/><path d="M14.3 3l1.9-1.2v5.9M14.6 7.7h3.2" stroke-width=".85"/></svg>
<div class="t" style="left:56.40px;top:425.53px;font-size:12.6px;line-height:12.6px;color:#555;font-weight:700;letter-spacing:1.104px;">Number</div>
<div class="t" style="left:55.40px;top:441.03px;font-size:12.6px;line-height:12.6px;color:#9b9b9b;letter-spacing:1.180px;">Number</div>
<div class="r" style="left:0px;top:455px;width:203px;height:1px;background:#d3d3d3"></div>
<svg class="s" style="left:30px;top:463.6px;" width="24" height="20" viewBox="0 0 24 20" fill="none" stroke="#666" stroke-width="1.1" stroke-linecap="round" stroke-linejoin="round"><circle cx="8.4" cy="5.7" r="3.8"/><path d="M1.5 18.6A6.9 7 0 0 1 15.3 18.6z"/></svg>
<div class="t" style="left:56.40px;top:460.53px;font-size:12.6px;line-height:12.6px;color:#555;font-weight:700;letter-spacing:0.563px;">Recruiter</div>
<div class="t" style="left:55.40px;top:476.03px;font-size:12.6px;line-height:12.6px;color:#9b9b9b;letter-spacing:0.588px;">Recruiter</div>
<svg class="s" style="left:175px;top:466.6px;" width="18" height="12" viewBox="0 0 18 12" fill="none" stroke="#666" stroke-width="1.25" stroke-linecap="round" stroke-linejoin="round"><path d="M1.6 3l6.8 6.8L15.2 3"/></svg>
<div class="r" style="left:0px;top:490px;width:203px;height:1px;background:#d3d3d3"></div>
<svg class="s" style="left:30px;top:498.6px;" width="24" height="20" viewBox="0 0 24 20" fill="none" stroke="#666" stroke-width="1.1" stroke-linecap="round" stroke-linejoin="round"><rect x="-6.1" y="-3.1" width="12.2" height="6.2" rx="3.1" transform="translate(7.6 11.6) rotate(-45)"/><rect x="-6.1" y="-3.1" width="12.2" height="6.2" rx="3.1" transform="translate(15.2 7.8) rotate(-45)"/></svg>
<div class="t" style="left:56.40px;top:495.53px;font-size:12.6px;line-height:12.6px;color:#555;font-weight:700;letter-spacing:0.423px;">Status</div>
<div class="t" style="left:56.40px;top:511.03px;font-size:12.6px;line-height:12.6px;color:#9b9b9b;letter-spacing:0.359px;">Status</div>
<svg class="s" style="left:175px;top:501.6px;" width="18" height="12" viewBox="0 0 18 12" fill="none" stroke="#666" stroke-width="1.25" stroke-linecap="round" stroke-linejoin="round"><path d="M1.6 3l6.8 6.8L15.2 3"/></svg>
</div>
<div class="r" style="left:484px;top:393px;width:9px;height:304px;background:#d6d6d6;border-radius:4.5px"></div>
<div class="r" style="left:524px;top:121px;width:510px;height:44px;background:#fff;border-radius:4px;box-shadow:0 1px 4px rgba(0,0,0,.13)"></div>
<div class="t" style="left:554.90px;top:135.81px;font-size:14.4px;line-height:14.4px;color:#555;letter-spacing:-0.966px;">Save</div>
<div class="t" style="left:625.40px;top:135.81px;font-size:14.4px;line-height:14.4px;color:#555;letter-spacing:0.162px;">Submit</div>
<div class="clip" style="left:0;top:176px;width:1060px;height:744px">
<div class="r" style="left:524px;top:5.0px;width:510px;height:900px;border:1px solid #c8c8c8;box-sizing:border-box"></div>
<div class="t" style="left:535.00px;top:17.93px;font-size:16.5px;line-height:16.5px;color:#555;font-weight:700;letter-spacing:0.282px;">Read only form</div>
<div class="r" style="left:537px;top:57.0px;width:484px;height:352px;background:#fff;border-radius:4px;box-shadow:0 1px 3px rgba(0,0,0,.2)"></div>
<div class="r" style="left:537px;top:57.0px;width:484px;height:39px;background:#f4f4f4;border-radius:4px 4px 0 0;border-bottom:1px solid #d0d0d0"></div>
<div class="t" style="left:556.80px;top:67.26px;font-size:19.3px;line-height:19.3px;color:#555;letter-spacing:0.741px;">Main Information</div>
<svg class="s" style="left:984.3px;top:72.8px;" width="13" height="9" viewBox="0 0 13 9" fill="none" stroke="#555" stroke-width="1.2" stroke-linecap="round" stroke-linejoin="round"><path d="M1.6 6.8L6.4 2.2l4.8 4.6"/></svg>
<div class="r" style="left:564px;top:121.0px;width:430px;height:25px;border:2px dashed #cdcdcd;border-radius:4px;box-sizing:border-box"></div>
<div class="t" style="left:753.15px;top:126.79px;font-size:13.6px;line-height:13.6px;color:#bdbdbd;font-weight:700;letter-spacing:0.360px;">Toolbar</div>
<div class="r" style="left:552px;top:226.0px;width:454px;height:144px;border:2px solid #e1e1e1;box-sizing:border-box"></div>
<div class="t" style="left:569.40px;top:249.13px;font-size:13.2px;line-height:13.2px;color:#555;font-weight:700;letter-spacing:0.513px;">Department</div>
<div class="r" style="left:559px;top:266.0px;width:125px;height:30px;background:#fff;border:1px solid #cfcfcf;border-radius:4px;box-sizing:border-box"></div>
<div class="t" style="left:570.00px;top:273.01px;font-size:14.4px;line-height:14.4px;color:#7a7a7a;letter-spacing:-0.154px;">Add Referen...</div>
<svg class="s" style="left:659.5px;top:271.2px;" width="22" height="19" viewBox="0 0 22 19" fill="none" stroke="#aaa" stroke-width="1.15" stroke-linecap="round" stroke-linejoin="round"><g transform="scale(.88)"><rect x="-6.1" y="-3.1" width="12.2" height="6.2" rx="3.1" transform="translate(7.6 11.6) rotate(-45)"/><rect x="-6.1" y="-3.1" width="12.2" height="6.2" rx="3.1" transform="translate(15.2 7.8) rotate(-45)"/></g></svg>
<div class="t" style="left:704.40px;top:249.13px;font-size:13.2px;line-height:13.2px;color:#555;font-weight:700;letter-spacing:0.041px;">Upper s...</div>
<div class="r" style="left:694px;top:266.0px;width:80px;height:30px;background:#fff;border:1px solid #cfcfcf;border-radius:4px;box-sizing:border-box"></div>
<div class="t" style="left:704.00px;top:273.01px;font-size:14.4px;line-height:14.4px;color:#7a7a7a;letter-spacing:0.243px;">Enter...</div>
<svg class="s" style="left:753.6px;top:271.6px;" width="20" height="19" viewBox="0 0 20 19" fill="none" stroke="#aaa" stroke-width="1.0" stroke-linecap="round" stroke-linejoin="round"><path d="M1.8 3.6C5 7.6 8.6 12 12 15.8M11.8 3.6C8.6 7.6 5 12 1.6 15.8" stroke-width=".95"/><path d="M14.3 3l1.9-1.2v5.9M14.6 7.7h3.2" stroke-width=".85"/></svg>
<div class="t" style="left:794.50px;top:249.13px;font-size:13.2px;line-height:13.2px;color:#555;font-weight:700;letter-spacing:0.288px;">Creator</div>
<div class="r" style="left:784px;top:266.0px;width:101px;height:30px;background:#fff;border:1px solid #cfcfcf;border-radius:4px;box-sizing:border-box"></div>
<div class="t" style="left:795.50px;top:273.01px;font-size:14.4px;line-height:14.4px;color:#7a7a7a;letter-spacing:-0.250px;">Add acco...</div>
<svg class="s" style="left:866.7px;top:271.4px;" width="16" height="18" viewBox="0 0 16 18" fill="none" stroke="#999" stroke-width="1.2" stroke-linecap="round" stroke-linejoin="round"><g transform="scale(.85)"><circle cx="8.4" cy="5.7" r="3.8"/><path d="M1.5 18.6A6.9 7 0 0 1 15.3 18.6z"/></g></svg>
<div class="t" style="left:907.00px;top:249.13px;font-size:13.2px;line-height:13.2px;color:#555;font-weight:700;letter-spacing:-0.070px;">Current Ass...</div>
<div class="r" style="left:896px;top:266.0px;width:103px;height:30px;background:#fff;border:1px solid #cfcfcf;border-radius:4px;box-sizing:border-box"></div>
<div class="t" style="left:907.60px;top:273.01px;font-size:14.4px;line-height:14.4px;color:#7a7a7a;letter-spacing:-0.220px;">Add acco...</div>
<svg class="s" style="left:980.7px;top:271.4px;" width="16" height="18" viewBox="0 0 16 18" fill="none" stroke="#999" stroke-width="1.2" stroke-linecap="round" stroke-linejoin="round"><g transform="scale(.85)"><circle cx="8.4" cy="5.7" r="3.8"/><path d="M1.5 18.6A6.9 7 0 0 1 15.3 18.6z"/></g></svg>
<div class="t" style="left:569.40px;top:302.13px;font-size:13.2px;line-height:13.2px;color:#555;font-weight:700;letter-spacing:-0.193px;">Vacancy</div>
<div class="r" style="left:559px;top:319.0px;width:125px;height:30px;background:#fff;border:1px solid #cfcfcf;border-radius:4px;box-sizing:border-box"></div>
<div class="t" style="left:570.00px;top:326.01px;font-size:14.4px;line-height:14.4px;color:#7a7a7a;letter-spacing:-0.154px;">Add Referen...</div>
<svg class="s" style="left:659.5px;top:324.2px;" width="22" height="19" viewBox="0 0 22 19" fill="none" stroke="#aaa" stroke-width="1.15" stroke-linecap="round" stroke-linejoin="round"><g transform="scale(.88)"><rect x="-6.1" y="-3.1" width="12.2" height="6.2" rx="3.1" transform="translate(7.6 11.6) rotate(-45)"/><rect x="-6.1" y="-3.1" width="12.2" height="6.2" rx="3.1" transform="translate(15.2 7.8) rotate(-45)"/></g></svg>
<div class="t" style="left:704.40px;top:302.13px;font-size:13.2px;line-height:13.2px;color:#555;font-weight:700;letter-spacing:0.246px;">Target D...</div>
<div class="r" style="left:694px;top:319.0px;width:80px;height:30px;background:#fff;border:1px solid #cfcfcf;border-radius:4px;box-sizing:border-box"></div>
<div class="t" style="left:704.00px;top:326.01px;font-size:14.4px;line-height:14.4px;color:#7a7a7a;letter-spacing:-0.072px;">Pick t...</div>
<svg class="s" style="left:754.7px;top:325.8px;" width="16" height="18" viewBox="0 0 16 18" fill="none" stroke="#aaa" stroke-width="1.1" stroke-linecap="round" stroke-linejoin="round"><g transform="scale(.85)"><rect x="1.5" y="3.6" width="13.8" height="14.6" rx="1.4"/><path d="M1.5 5.5h13.8" stroke-width="2.2"/><path d="M1.5 9.5h13.8M1.5 13.2h13.8M6.1 6.6v11.6M10.7 6.6v11.6" stroke-width=".8"/><path d="M4.6 1.4v2.2M12.2 1.4v2.2"/></g></svg>
<div class="t" style="left:794.50px;top:302.13px;font-size:13.2px;line-height:13.2px;color:#555;font-weight:700;letter-spacing:0.291px;">Creation Date</div>
<div class="r" style="left:784px;top:319.0px;width:101px;height:30px;background:#fff;border:1px solid #cfcfcf;border-radius:4px;box-sizing:border-box"></div>
<div class="t" style="left:794.50px;top:326.01px;font-size:14.4px;line-height:14.4px;color:#7a7a7a;letter-spacing:-0.062px;">Pick the ...</div>
<svg class="s" style="left:865.7px;top:325.8px;" width="16" height="18" viewBox="0 0 16 18" fill="none" stroke="#aaa" stroke-width="1.1" stroke-linecap="round" stroke-linejoin="round"><g transform="scale(.85)"><rect x="1.5" y="3.6" width="13.8" height="14.6" rx="1.4"/><path d="M1.5 5.5h13.8" stroke-width="2.2"/><path d="M1.5 9.5h13.8M1.5 13.2h13.8M6.1 6.6v11.6M10.7 6.6v11.6" stroke-width=".8"/><path d="M4.6 1.4v2.2M12.2 1.4v2.2"/></g></svg>
<div class="t" style="left:907.00px;top:302.13px;font-size:13.2px;line-height:13.2px;color:#555;font-weight:700;letter-spacing:0.066px;">Status</div>
<div class="r" style="left:896px;top:319.0px;width:103px;height:30px;background:#fff;border:1px solid #cfcfcf;border-radius:4px;box-sizing:border-box"></div>
<div class="t" style="left:907.60px;top:326.01px;font-size:14.4px;line-height:14.4px;color:#7a7a7a;letter-spacing:-0.320px;">Add Refe...</div>
<svg class="s" style="left:974.5px;top:324.2px;" width="22" height="19" viewBox="0 0 22 19" fill="none" stroke="#aaa" stroke-width="1.15" stroke-linecap="round" stroke-linejoin="round"><g transform="scale(.88)"><rect x="-6.1" y="-3.1" width="12.2" height="6.2" rx="3.1" transform="translate(7.6 11.6) rotate(-45)"/><rect x="-6.1" y="-3.1" width="12.2" height="6.2" rx="3.1" transform="translate(15.2 7.8) rotate(-45)"/></g></svg>
<div class="r" style="left:537px;top:423.0px;width:484px;height:600px;background:#fff;border-radius:4px;box-shadow:0 1px 3px rgba(0,0,0,.2)"></div>
<div class="r" style="left:537px;top:423.0px;width:484px;height:40px;background:#f4f4f4;border-radius:4px 4px 0 0;border-bottom:1px solid #d0d0d0"></div>
<div class="t" style="left:557.30px;top:432.89px;font-size:19.5px;line-height:19.5px;color:#555;letter-spacing:0.554px;">Additional Information</div>
<svg class="s" style="left:984.3px;top:438.8px;" width="13" height="9" viewBox="0 0 13 9" fill="none" stroke="#555" stroke-width="1.2" stroke-linecap="round" stroke-linejoin="round"><path d="M1.6 6.8L6.4 2.2l4.8 4.6"/></svg>
<div class="r" style="left:564px;top:487.0px;width:430px;height:26px;border:2px dashed #cdcdcd;border-radius:4px;box-sizing:border-box"></div>
<div class="t" style="left:753.15px;top:492.79px;font-size:13.6px;line-height:13.6px;color:#bdbdbd;font-weight:700;letter-spacing:0.360px;">Toolbar</div>
<div class="t" style="left:579.90px;top:607.16px;font-size:12.8px;line-height:12.8px;color:#1f7ea8;letter-spacing:0.200px;">Vacancy Details</div>
<div class="t" style="left:715.40px;top:607.16px;font-size:12.8px;line-height:12.8px;color:#555;letter-spacing:0.318px;">Candidates</div>
<div class="t" style="left:823.50px;top:607.16px;font-size:12.8px;line-height:12.8px;color:#555;letter-spacing:0.361px;">Discussion</div>
<div class="r" style="left:559px;top:626.0px;width:441px;height:400px;border:1px solid #8c8c8c;box-sizing:border-box"></div>
<div class="r" style="left:560px;top:625.6px;width:136px;height:3px;background:#0b9fd4"></div>
<div class="r" style="left:602px;top:651.0px;width:354px;height:26px;border:2px dashed #cdcdcd;border-radius:4px;box-sizing:border-box"></div>
<div class="t" style="left:753.15px;top:656.79px;font-size:13.6px;line-height:13.6px;color:#bdbdbd;font-weight:700;letter-spacing:0.360px;">Toolbar</div>
<div class="r" style="left:575px;top:702.0px;width:408px;height:200px;border:1px solid #d0d0d0;box-sizing:border-box"></div>
<div class="t" style="left:585.00px;top:715.49px;font-size:17.5px;line-height:17.5px;color:#555;font-weight:700;letter-spacing:0.244px;">Main form</div>
</div>
<div class="r" style="left:1045px;top:116px;width:10px;height:175px;background:#d2d2d2;border-radius:5px"></div>
<div class="r" style="left:1065px;top:120px;width:349px;height:805px;background:#f4f4f4;border-radius:4px;box-shadow:0 1px 6px rgba(0,0,0,.16)"></div>
<div class="t" style="left:1075.20px;top:130.49px;font-size:17.5px;line-height:17.5px;color:#888;letter-spacing:0.384px;">Subform properties</div>
<div class="t" style="left:1085.60px;top:171.80px;font-size:13px;line-height:13px;color:#555;font-weight:700;letter-spacing:0.256px;">Display name</div>
<div class="t" style="left:1084.60px;top:196.51px;font-size:14.4px;line-height:14.4px;color:#8a8a8a;letter-spacing:0.124px;">Read only form</div>
<div class="t" style="left:1085.20px;top:240.70px;font-size:13px;line-height:13px;color:#555;font-weight:700;letter-spacing:0.301px;">System name</div>
<div class="r" style="left:1075px;top:258px;width:329px;height:30px;background:#fff;border:1px solid #d6d6d6;border-radius:4px;box-sizing:border-box"></div>
<div class="t" style="left:1086.60px;top:266.01px;font-size:14.4px;line-height:14.4px;color:#555;letter-spacing:0.211px;">defaultForm</div>
<div class="t" style="left:1085.20px;top:310.00px;font-size:13px;line-height:13px;color:#555;font-weight:700;letter-spacing:0.602px;">Attribute path</div>
<div class="t" style="left:1085.60px;top:334.61px;font-size:14.4px;line-height:14.4px;color:#8a8a8a;letter-spacing:0.201px;">defaultForm</div>
<div class="t" style="left:1085.20px;top:379.30px;font-size:13px;line-height:13px;color:#555;font-weight:700;letter-spacing:-0.622px;">Access</div>
<div class="r" style="left:1075px;top:395px;width:329px;height:30px;background:#fff;border:1px solid #d6d6d6;border-radius:4px;box-sizing:border-box"></div>
<div class="t" style="left:1086.60px;top:402.81px;font-size:14.4px;line-height:14.4px;color:#555;letter-spacing:0.169px;">Hide</div>
<svg class="s" style="left:1379px;top:405px;" width="16" height="10" viewBox="0 0 16 10" fill="none" stroke="#555" stroke-width="1.2" stroke-linecap="round" stroke-linejoin="round"><path d="M2 2.4l6 5.6 6-5.6"/></svg>
<svg class="s" style="left:1085px;top:447px;" width="22" height="22" viewBox="0 0 22 22" fill="none" stroke="#2f86b0" stroke-width="1.2" stroke-linecap="round" stroke-linejoin="round"><path d="M15.6 2.6a2 2 0 0 1 2.9 0l.9.9a2 2 0 0 1 0 2.9L7.6 18.2 3 19.2l1-4.6z"/><path d="M13.6 4.6l3.8 3.8"/></svg>
<div class="t" style="left:1220.00px;top:450.81px;font-size:14.4px;line-height:14.4px;color:#1f7ea8;letter-spacing:0.376px;">Edit form</div>
</body></html>
